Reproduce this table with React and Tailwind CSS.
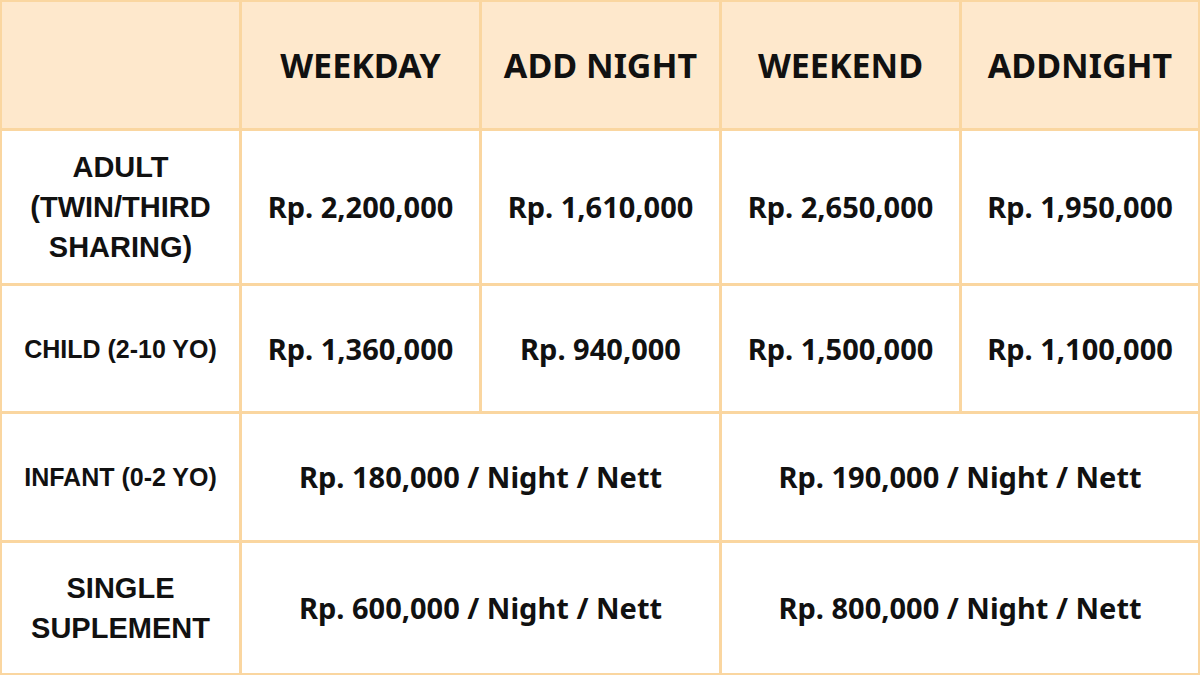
import React from "react";

const head = "flex items-center justify-center bg-[#fee8cc] text-[34px] font-bold text-[#111]";
const label = "flex items-center justify-center bg-white text-center font-bold text-[#111] leading-[40px]";
const val = "flex items-center justify-center bg-white text-[29px] font-bold text-[#111]";
const lf = { fontFamily: '"Liberation Sans", Arial, sans-serif' };

export default function App() {
  return (
    <div
      className="grid h-[675px] w-[1200px] grid-cols-[237px_237px_237px_237px_236px] grid-rows-[126px_152px_125px_126px_130px] gap-[3px] bg-[#fad6a0] p-[2px]"
      style={{ fontFamily: '"Noto Sans", "Open Sans", sans-serif' }}
    >
      <div className="bg-[#fee8cc]" />
      <div className={head}>WEEKDAY</div>
      <div className={head}>ADD NIGHT</div>
      <div className={head}>WEEKEND</div>
      <div className={head}>ADDNIGHT</div>

      <div className={label + " text-[29px]"} style={lf}>
        ADULT<br />(TWIN/THIRD<br />SHARING)
      </div>
      <div className={val}>Rp. 2,200,000</div>
      <div className={val}>Rp. 1,610,000</div>
      <div className={val}>Rp. 2,650,000</div>
      <div className={val}>Rp. 1,950,000</div>

      <div className={label + " text-[25px]"} style={lf}>
        CHILD (2-10 YO)
      </div>
      <div className={val}>Rp. 1,360,000</div>
      <div className={val}>Rp. 940,000</div>
      <div className={val}>Rp. 1,500,000</div>
      <div className={val}>Rp. 1,100,000</div>

      <div className={label + " text-[25px]"} style={lf}>
        INFANT (0-2 YO)
      </div>
      <div className={val + " col-span-2"}>Rp. 180,000 / Night / Nett</div>
      <div className={val + " col-span-2"}>Rp. 190,000 / Night / Nett</div>

      <div className={label + " text-[29px]"} style={lf}>
        SINGLE<br />SUPLEMENT
      </div>
      <div className={val + " col-span-2"}>Rp. 600,000 / Night / Nett</div>
      <div className={val + " col-span-2"}>Rp. 800,000 / Night / Nett</div>
    </div>
  );
}
